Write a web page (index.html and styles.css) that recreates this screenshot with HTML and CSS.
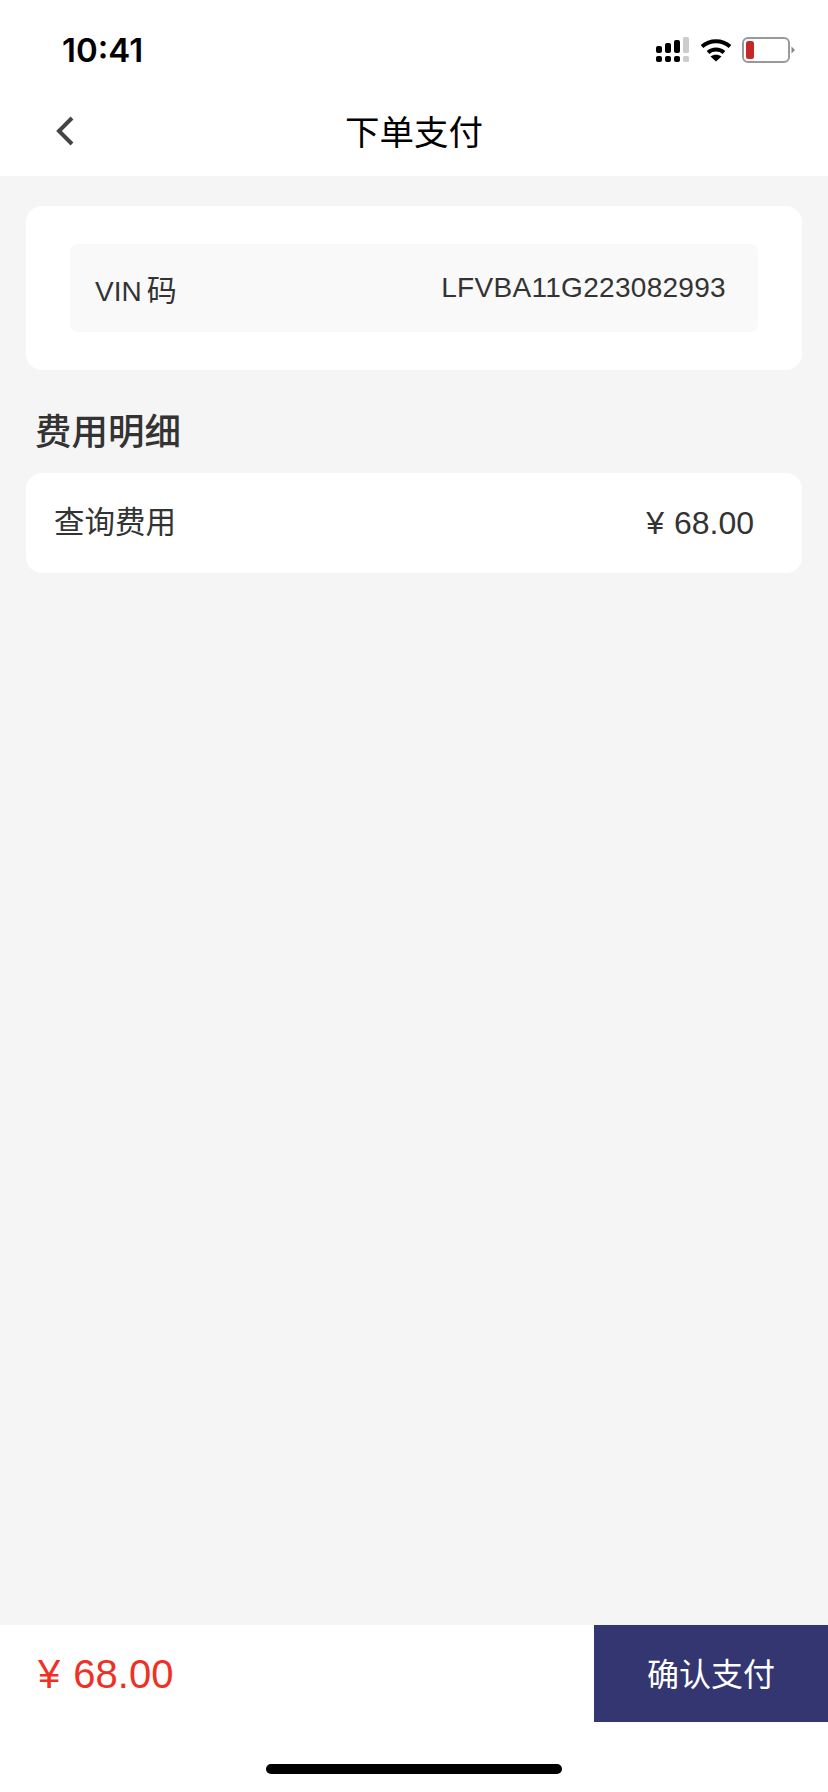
FILE: index.html
```html
<!DOCTYPE html>
<html lang="zh">

<head>
    <meta charset="UTF-8">
    <meta name="viewport" content="width=device-width, initial-scale=1.0">
    <title>下单支付</title>
    <link rel="stylesheet" href="styles.css">
</head>

<body>
    <div class="page">
        <div class="statusbar">
            <span class="time">10:41</span>
            <div class="status-icons">
                <svg class="signal" width="34" height="26" viewBox="0 0 34 26">
                    <rect x="0" y="9" width="6" height="7" rx="2" fill="#000" />
                    <rect x="9" y="6" width="6" height="10" rx="2" fill="#000" />
                    <rect x="18" y="3" width="6" height="13" rx="2" fill="#000" />
                    <rect x="27" y="0" width="6" height="16" rx="1.5" fill="#ccc" />
                    <rect x="0" y="19" width="6" height="6" rx="2" fill="#000" />
                    <rect x="9" y="19" width="6" height="6" rx="2" fill="#000" />
                    <rect x="18" y="19" width="6" height="6" rx="2" fill="#000" />
                    <rect x="27" y="19" width="6" height="6" rx="1.5" fill="#ccc" />
                </svg>
                <svg class="wifi" width="32" height="24" viewBox="0 0 32 24">
                    <path d="M2 8.5C10 1.5 22 1.5 30 8.5" fill="none" stroke="#000" stroke-width="4" />
                    <path d="M8 14.5C12.5 10.5 19.5 10.5 24 14.5" fill="none" stroke="#000" stroke-width="4" />
                    <path d="M16 23.5L10.5 18.5C13.5 16.2 18.5 16.2 21.5 18.5Z" fill="#000" />
                </svg>
                <svg class="battery" width="54" height="26" viewBox="0 0 54 26">
                    <rect x="1" y="1" width="46" height="24" rx="5" fill="#fff" stroke="#999" stroke-width="2" />
                    <rect x="4" y="4" width="8" height="18" rx="2.5" fill="#c62828" />
                    <path d="M49.5 9.5L53 13L49.5 16.5Z" fill="#888" />
                </svg>
            </div>
        </div>

        <div class="navbar">
            <svg class="back" width="20" height="32" viewBox="0 0 20 32">
                <path d="M17 3L4 16L17 29" fill="none" stroke="#444" stroke-width="4" />
            </svg>
            <span class="nav-title">下单支付</span>
        </div>

        <div class="content">
            <div class="card vin-card">
                <div class="vin-row">
                    <span class="vin-label">VIN<span class="vin-cn">码</span></span>
                    <span class="vin-no">LFVBA11G223082993</span>
                </div>
            </div>

            <div class="section-title">费用明细</div>

            <div class="card fee-row">
                <span class="fee-label">查询费用</span>
                <span class="fee-price">¥ 68.00</span>
            </div>
        </div>

        <div class="paybar">
            <div class="pay-total">¥ 68.00</div>
            <div class="pay-btn"><span class="pay-text">确认支付</span></div>
        </div>
        <div class="homebar">
            <div class="home-indicator"></div>
        </div>
    </div>
</body>

</html>
```

FILE: styles.css
```css
* {
    box-sizing: border-box;
}

body {
    margin: 0;
    font-family: "Liberation Sans", "Noto Sans CJK SC", sans-serif;
    color: #333;
}

.page {
    display: flex;
    flex-direction: column;
    width: 828px;
    height: 1792px;
    background-color: #f5f5f5;
}

.statusbar {
    display: flex;
    justify-content: space-between;
    align-items: center;
    height: 88px;
    padding: 12px 32px 0 62px;
    background-color: #fff;
}

.time {
    font-family: Inter, "Liberation Sans", sans-serif;
    font-size: 33px;
    font-weight: 600;
    color: #000;
}

.status-icons {
    display: flex;
    align-items: center;
    gap: 10px;
}

.navbar {
    display: flex;
    justify-content: center;
    align-items: center;
    position: relative;
    height: 88px;
    background-color: #fff;
}

.back {
    position: absolute;
    left: 55px;
    top: 27px;
}

.nav-title {
    padding-bottom: 5px;
    font-size: 34.5px;
    color: #000;
}

.content {
    flex: 1;
    padding: 30px 26px 0;
}

.card {
    background-color: #fff;
    border-radius: 16px;
}

.vin-card {
    padding: 38px 44px;
}

.vin-row {
    display: flex;
    justify-content: space-between;
    align-items: center;
    height: 88px;
    padding: 0 32px 0 25px;
    background-color: #f9f9f9;
    border-radius: 8px;
    font-size: 28px;
}

.vin-cn {
    margin-left: 5px;
    font-size: 30px;
}

.vin-no {
    letter-spacing: 0.3px;
}

.section-title {
    margin: 39px 0 16px 9px;
    font-size: 36.5px;
    font-weight: 500;
    line-height: 48px;
}

.fee-row {
    display: flex;
    justify-content: space-between;
    align-items: center;
    height: 100px;
    padding: 0 48px 0 28px;
    font-size: 30.5px;
}

.fee-label {
    padding-bottom: 6px;
}

.fee-price {
    font-size: 32px;
    word-spacing: 1px;
}

.paybar {
    display: flex;
    justify-content: space-between;
    height: 97px;
    background-color: #fff;
}

.pay-total {
    align-self: center;
    padding: 2px 0 0 38px;
    font-size: 40px;
    word-spacing: 2px;
    color: #ee3124;
}

.pay-btn {
    display: flex;
    justify-content: center;
    align-items: center;
    width: 234px;
    background-color: #343672;
    color: #fff;
    font-size: 32px;
}

.pay-text {
    padding-bottom: 3px;
}

.homebar {
    display: flex;
    justify-content: center;
    height: 70px;
    padding-top: 42px;
    background-color: #fff;
}

.home-indicator {
    width: 296px;
    height: 10px;
    background-color: #000;
    border-radius: 5px;
}
```
